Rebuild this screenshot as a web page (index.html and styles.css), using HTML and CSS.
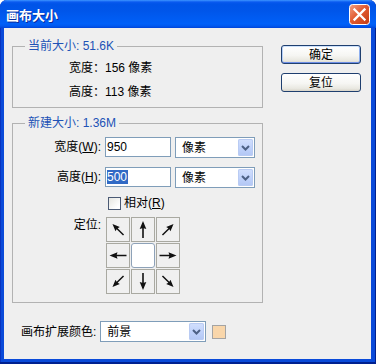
FILE: index.html
```html
<!DOCTYPE html>
<html lang="zh-CN">
<head>
<meta charset="utf-8">
<title>画布大小</title>
<link rel="stylesheet" href="styles.css">
</head>
<body>
<div class="window">
  <div class="titlebar">
    <span class="title">画布大小</span>
    <span class="close">
      <svg width="21" height="21" viewBox="0 0 21 21">
        <defs>
          <linearGradient id="cg" x1="0" y1="0" x2="1" y2="1">
            <stop offset="0" stop-color="#f3a285"/>
            <stop offset="0.45" stop-color="#e25c33"/>
            <stop offset="1" stop-color="#c33a12"/>
          </linearGradient>
        </defs>
        <rect x="0.5" y="0.5" width="20" height="20" rx="3" fill="url(#cg)" stroke="#ffffff"/>
        <path d="M5.5 5.5 L15.5 15.5 M15.5 5.5 L5.5 15.5" stroke="#ffffff" stroke-width="2.3" stroke-linecap="square"/>
      </svg>
    </span>
  </div>
  <div class="client">
    <div class="main">
      <div class="groups">
        <fieldset class="group current">
          <legend>当前大小: 51.6K</legend>
          <div class="info">宽度：156 像素</div>
          <div class="info">高度：113 像素</div>
        </fieldset>
        <fieldset class="group newsize">
          <legend>新建大小: 1.36M</legend>
          <div class="row">
            <span class="lbl">宽度(<u>W</u>):</span>
            <span class="field">950</span>
            <span class="combo"><span class="val">像素</span>
              <span class="drop"><svg width="15" height="17" viewBox="0 0 15 17"><polyline points="4,7 7.5,10.5 11,7" fill="none" stroke="#4d6185" stroke-width="2"/></svg></span>
            </span>
          </div>
          <div class="row row2">
            <span class="lbl">高度(<u>H</u>):</span>
            <span class="field"><span class="sel">500</span></span>
            <span class="combo"><span class="val">像素</span>
              <span class="drop"><svg width="15" height="17" viewBox="0 0 15 17"><polyline points="4,7 7.5,10.5 11,7" fill="none" stroke="#4d6185" stroke-width="2"/></svg></span>
            </span>
          </div>
          <div class="checkrow">
            <span class="check"></span>
            <span class="checktext">相对(<u>R</u>)</span>
          </div>
          <div class="anchorrow">
            <span class="lbl anchorlbl">定位:</span>
            <div class="anchor">
              <span class="cell"><svg width="22" height="23" viewBox="0 0 22 23"><g transform="rotate(-45 11 11.5) translate(11 11.5) scale(0.92) translate(-11 -11.5)"><path d="M11 3 L7.7 11 L10.2 10.2 L10.2 20 L11.8 20 L11.8 10.2 L14.3 11 Z" fill="#111"/></g></svg></span>
              <span class="cell"><svg width="22" height="23" viewBox="0 0 22 23"><g transform="rotate(0 11 11.5)"><path d="M11 3 L7.7 11 L10.2 10.2 L10.2 20 L11.8 20 L11.8 10.2 L14.3 11 Z" fill="#111"/></g></svg></span>
              <span class="cell"><svg width="22" height="23" viewBox="0 0 22 23"><g transform="rotate(45 11 11.5) translate(11 11.5) scale(0.92) translate(-11 -11.5)"><path d="M11 3 L7.7 11 L10.2 10.2 L10.2 20 L11.8 20 L11.8 10.2 L14.3 11 Z" fill="#111"/></g></svg></span>
              <span class="cell"><svg width="22" height="23" viewBox="0 0 22 23"><g transform="rotate(-90 11 11.5)"><path d="M11 3 L7.7 11 L10.2 10.2 L10.2 20 L11.8 20 L11.8 10.2 L14.3 11 Z" fill="#111"/></g></svg></span>
              <span class="cell center"></span>
              <span class="cell"><svg width="22" height="23" viewBox="0 0 22 23"><g transform="rotate(90 11 11.5)"><path d="M11 3 L7.7 11 L10.2 10.2 L10.2 20 L11.8 20 L11.8 10.2 L14.3 11 Z" fill="#111"/></g></svg></span>
              <span class="cell"><svg width="22" height="23" viewBox="0 0 22 23"><g transform="rotate(-135 11 11.5) translate(11 11.5) scale(0.92) translate(-11 -11.5)"><path d="M11 3 L7.7 11 L10.2 10.2 L10.2 20 L11.8 20 L11.8 10.2 L14.3 11 Z" fill="#111"/></g></svg></span>
              <span class="cell"><svg width="22" height="23" viewBox="0 0 22 23"><g transform="rotate(180 11 11.5)"><path d="M11 3 L7.7 11 L10.2 10.2 L10.2 20 L11.8 20 L11.8 10.2 L14.3 11 Z" fill="#111"/></g></svg></span>
              <span class="cell"><svg width="22" height="23" viewBox="0 0 22 23"><g transform="rotate(135 11 11.5) translate(11 11.5) scale(0.92) translate(-11 -11.5)"><path d="M11 3 L7.7 11 L10.2 10.2 L10.2 20 L11.8 20 L11.8 10.2 L14.3 11 Z" fill="#111"/></g></svg></span>
            </div>
          </div>
        </fieldset>
      </div>
      <div class="buttons">
        <span class="btn default">确定</span>
        <span class="btn">复位</span>
      </div>
    </div>
    <div class="extrow">
      <span class="extlbl">画布扩展颜色:</span>
      <span class="combo wide"><span class="val">前景</span>
        <span class="drop"><svg width="15" height="17" viewBox="0 0 15 17"><polyline points="4,7 7.5,10.5 11,7" fill="none" stroke="#4d6185" stroke-width="2"/></svg></span>
      </span>
      <span class="swatch"></span>
    </div>
  </div>
</div>
</body>
</html>
```
FILE: styles.css
```css
* { box-sizing: border-box; }
html, body { margin: 0; padding: 0; background: #ffffff; }
body {
  width: 376px;
  height: 364px;
  overflow: hidden;
  font: 12px/14px "Liberation Sans", "Noto Sans CJK SC", sans-serif;
  color: #000;
}
.window {
  width: 376px;
  height: 364px;
  display: flex;
  flex-direction: column;
  background: #0a4ad9;
  border-radius: 7px 7px 0 0;
  overflow: hidden;
  box-shadow: inset -1px 0 0 #00208f, inset 0 -2px 0 #00208f, inset 1px 0 0 #0833c0;
}
.titlebar {
  height: 28px;
  flex: none;
  display: flex;
  align-items: center;
  justify-content: space-between;
  padding: 0 6px 0 6px;
  background: linear-gradient(180deg, #3d95ff 0, #0a5af0 2px, #0054e8 4px, #0056ea 40%, #0060f8 85%, #0058ef 93%, #0044d8 100%);
}
.title {
  color: #fff;
  font-weight: bold;
  font-size: 13px;
  line-height: 16px;
  font-family: "Noto Sans CJK SC", sans-serif;
  text-shadow: 1px 1px 0 #0a2a9a;
  margin-top: 1px;
}
.close { width: 21px; height: 21px; display: block; margin-top: 1px; }
.close svg { display: block; }
.client {
  flex: 1;
  margin: 0 5px 5px 4px;
  background: #efefef;
  padding: 11px 0 0 8px;
}
.main { display: flex; }
.groups { width: 251px; }
.buttons {
  margin-left: 18px;
  padding-top: 6px;
  display: flex;
  flex-direction: column;
  gap: 9px;
}
.btn {
  width: 80px;
  height: 19px;
  border: 1px solid #1f3f6f;
  border-radius: 3px;
  background: linear-gradient(180deg, #ffffff 0, #f6f6f3 55%, #e9e8e1 85%, #d8d4c9 100%);
  display: flex;
  align-items: center;
  justify-content: center;
  line-height: 14px;
}
.btn.default {
  box-shadow: inset 0 1px 0 #cde2fc, inset 0 -1px 0 #6d8ee6, inset 1px 0 0 #b6cff7, inset -1px 0 0 #8fb0ee;
}
.group {
  margin: 0;
  padding: 0;
  border: 1px solid #b2b2b2;
  min-width: 0;
}
.group legend {
  margin-left: 12px;
  padding: 0 3px;
  color: #2152b6;
  line-height: 14px;
}
.current { padding: 3px 0 3px 0; }
.info { line-height: 24px; height: 24px; padding-left: 56px; }
.newsize { margin-top: 8px; padding: 7px 0 8px 0; }
.row { display: flex; align-items: flex-start; height: 21px; }
.row2 { margin-top: 9px; }
.lbl {
  width: 88px;
  text-align: right;
  flex: none;
  line-height: 20px;
}
.field {
  margin-left: 4px;
  width: 66px;
  height: 20px;
  border: 1px solid #7f9db9;
  background: #fff;
  padding-left: 1px;
  line-height: 18px;
  flex: none;
}
.sel { background: #316ac5; color: #fff; display: inline-block; line-height: 14px; padding: 0 1px 0 0; }
.combo {
  margin-left: 4px;
  width: 80px;
  height: 21px;
  border: 1px solid #7f9db9;
  background: #fff;
  display: flex;
  align-items: center;
  justify-content: space-between;
  padding: 1px;
  flex: none;
}
.combo .val { padding-left: 5px; line-height: 14px; }
.drop {
  width: 15px;
  height: 17px;
  border-radius: 2px;
  background: linear-gradient(180deg, #d3e0fd 0, #c1d3fb 50%, #b2c6f4 100%);
  box-shadow: inset 0 0 0 1px #b9cbf3;
  display: block;
}
.drop svg { display: block; }
.checkrow { display: flex; align-items: center; margin-top: 8px; padding-left: 95px; height: 14px; }
.check {
  width: 13px;
  height: 13px;
  border: 1px solid #4b5a74;
  background: linear-gradient(135deg, #e6e6e0 0, #ffffff 80%);
  flex: none;
}
.checktext { margin-left: 3px; line-height: 14px; }
.anchorrow { display: flex; align-items: flex-start; margin-top: 7px; }
.anchorlbl { margin-top: 1px; line-height: 14px; }
.anchor {
  margin-left: 5px;
  display: grid;
  grid-template-columns: repeat(3, 24px);
  grid-auto-rows: 25px;
  gap: 1px;
}
.cell {
  border: 1px solid #a9a9a1;
  background: #f0f0f0;
  display: block;
}
.cell svg { display: block; }
.cell.center {
  background: #ffffff;
  border-color: #8ea2b8;
  border-radius: 3px;
}
.extrow { display: flex; align-items: center; margin-top: 18px; padding-left: 9px; }
.extlbl { line-height: 14px; }
.combo.wide { width: 106px; }
.swatch {
  margin-left: 6px;
  width: 14px;
  height: 14px;
  border: 1px solid #a4a4a4;
  background: #f9d6aa;
  flex: none;
}
```
